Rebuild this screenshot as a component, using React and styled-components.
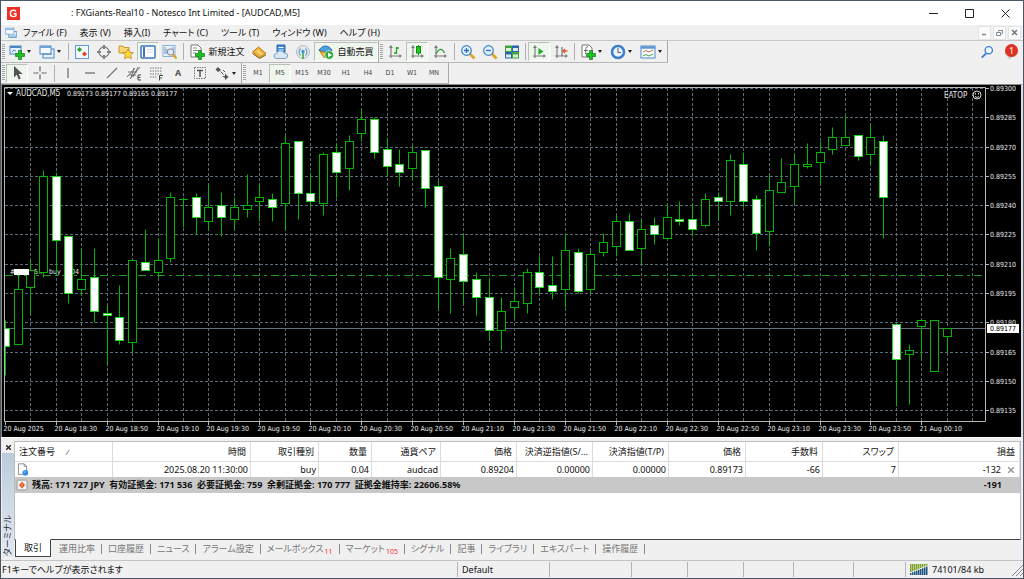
import React from 'react'
import styled, { createGlobalStyle, css } from 'styled-components';

const GlobalStyle = createGlobalStyle`
  * {
    box-sizing: border-box;
  }

  body {
    margin: 0;
    background: #f0f0f0;
    color: #111;
    font-family: "Noto Sans", "Noto Sans CJK JP", sans-serif;
    font-size: 9px;
    line-height: 12px;
    font-feature-settings: "palt";
  }

  button {
    margin: 0;
    padding: 0;
    border: 0;
    background: none;
    color: inherit;
    font: inherit;
    font-feature-settings: inherit;
  }
`;

const Window = styled.div`
  display: flex;
  flex-direction: column;
  min-height: 100vh;
  border: 1px solid #4b5768;
`;

/* ---------- title and menu ---------- */

const TitleBar = styled.header`
  display: flex;
  align-items: center;
  height: 24px;
  padding-left: 6px;
  background: #fff;

  h1 {
    flex: 1;
    margin: 0 0 0 51px;
    font-size: 9px;
    font-weight: 400;
    white-space: nowrap;
  }
`;

const CaptionButton = styled.button`
  display: flex;
  align-items: center;
  justify-content: center;
  width: 36px;
  height: 24px;
`;

const MenuBar = styled.nav`
  display: flex;
  align-items: center;
  height: 16px;
  padding-left: 4px;
  border-bottom: 1px solid #c6c6c6;
`;

const MenuList = styled.div`
  display: flex;
  flex: 1;
  gap: 13px;
  padding-left: 6px;
  white-space: nowrap;
`;

const MdiButton = styled.button`
  display: flex;
  align-items: center;
  justify-content: center;
  width: 13px;
  height: 14px;
  margin-right: 2px;
  background: #fbfbfb;
  border: 1px solid #e4e4e4;
`;

/* ---------- toolbars ---------- */

const ToolRow = styled.div`
  display: flex;
  height: ${p => p.$height}px;
`;

const Toolbar = styled.div`
  display: flex;
  align-items: center;
  border-right: 1px solid #a8a8a8;
  border-bottom: 1px solid #b8b8b8;
  padding-right: ${p => p.$end || 0}px;
`;

const Grip = styled.span`
  width: 3px;
  height: 16px;
  margin: 0 1px 0 1px;
  background: repeating-linear-gradient(#a5a5a5 0 1px, #f0f0f0 1px 2px);
`;

const Separator = styled.span`
  width: 1px;
  height: 17px;
  margin: 0 2px;
  background: #b0b0b0;
`;

const ToolButton = styled.button`
  display: flex;
  align-items: center;
  justify-content: center;
  gap: 3px;
  flex: none;
  width: ${p => p.$width || 22}px;
  height: 19px;
  white-space: nowrap;
  ${p => p.$menu && css`
    width: ${p.$width || 30}px;
    justify-content: flex-start;
    padding-left: 3px;
    gap: 2px;
  `}
  ${p => p.$active && css`
    background: #eef6ee;
    border: 1px solid #b9c2b9;
    border-right-color: #fff;
    border-bottom-color: #fff;
  `}

  b {
    color: #555;
  }
`;

const PeriodButton = styled(ToolButton)`
  color: #444;
  font-family: "DejaVu Sans Condensed", sans-serif;
  font-size: 7px;
`;

const Caret = styled.i`
  border: 2px solid transparent;
  border-top: 3px solid #222;
  border-bottom: 0;
`;

const ToolRowEnd = styled.div`
  display: flex;
  flex: 1;
  justify-content: flex-end;
  align-items: center;
  gap: 5px;
`;

const Alerts = styled.button`
  position: relative;
  width: 24px;
  height: 20px;
  padding-top: 4px;

  span {
    position: absolute;
    top: 2px;
    right: 5px;
    width: 13px;
    height: 13px;
    border-radius: 50%;
    background: #dc3220;
    color: #fff;
    font-size: 9px;
    line-height: 13px;
    text-align: center;
  }
`;

/* ---------- chart ---------- */

const ChartPanel = styled.main`
  background: #000;
  border: solid #8a8d88;
  border-width: 1px 2px 0 1px;
  border-right-color: #dcdcdc;

  svg {
    display: block;
    width: 100%;
    height: auto;
  }

  text {
    fill: #e8e8e8;
    font-family: "DejaVu Sans Condensed", sans-serif;
    font-size: 7px;
  }

  text.name {
    font-size: 8px;
  }

  text.bid {
    fill: #000;
  }
`;

/* ---------- terminal ---------- */

const Terminal = styled.section`
  display: flex;
  flex: 1;
  min-height: 123px;
  padding: 3px 2px 3px 1px;
  border-top: 1px solid #fff;
`;

const TerminalSide = styled.div`
  display: flex;
  flex-direction: column;
  width: 12px;
  flex: none;

  button {
    height: 12px;
    line-height: 0;
  }

  span {
    flex: 1;
    padding-top: 1px;
    background: linear-gradient(to top, #bccbdb, #e2eaf3);
    color: #333;
    line-height: 12px;
    writing-mode: vertical-rl;
    text-orientation: sideways;
    transform: rotate(180deg);
  }
`;

const TerminalBody = styled.div`
  display: flex;
  flex-direction: column;
  flex: 1;
`;

const TableArea = styled.div`
  flex: 1;
  background: #fff;
  border: 1px solid #bdbdbd;
  border-bottom: 1px solid #444;
`;

const OrderTable = styled.table`
  width: 100%;
  border-collapse: separate;
  border-spacing: 0;
  table-layout: fixed;
  white-space: nowrap;

  th, td {
    padding: 0 2px 0 0;
    border-right: 1px solid #dcdcdc;
    text-align: right;
    font-weight: 400;
  }

  th {
    height: 20px;
    padding-right: 4px;
    border-bottom: 1px solid #dcdcdc;
    overflow: hidden;
  }

  td {
    height: 15px;
  }

  th:first-child, td:first-child {
    padding-left: 4px;
    text-align: left;
  }

  td:first-child {
    padding-left: 1px;
  }

  tfoot td {
    height: 16px;
    background: #c8c8c8;
    border: 0;
    font-weight: 700;
  }

  svg {
    display: block;
  }
`;

const CellRow = styled.div`
  display: flex;
  align-items: center;
  justify-content: ${p => (p.$end ? 'flex-end' : 'flex-start')};
  gap: ${p => p.$gap || 6}px;
  padding-right: ${p => p.$pad || 0}px;
`;

const Tabs = styled.div`
  display: flex;
  height: 17px;
  padding-left: 1px;
`;

const Tab = styled.button`
  display: flex;
  align-items: center;
  color: #777;
  white-space: nowrap;

  &::after {
    content: "";
    width: 1px;
    height: 10px;
    margin: 0 6px;
    background: #8a8a8a;
  }

  sub {
    margin-left: 1px;
    padding-top: 7px;
    color: #f03030;
    font-size: 7px;
    line-height: 8px;
    vertical-align: baseline;
  }

  ${p => p.$active && css`
    margin: -1px 8px 0 0;
    padding: 0 8px;
    background: #fff;
    border: 1px solid #444;
    border-top-color: #fff;
    color: #111;

    &::after {
      display: none;
    }
  `}
`;

const StatusBar = styled.footer`
  display: flex;
  align-items: center;
  height: 18px;
  border-top: 1px solid #c4c4c4;
  white-space: nowrap;
`;

const StatusCell = styled.div`
  display: flex;
  align-items: center;
  gap: 4px;
  flex: ${p => (p.$width ? 'none' : 1)};
  width: ${p => (p.$width ? p.$width + 'px' : 'auto')};
  height: 15px;
  padding-left: ${p => (p.$width ? 4 : 1)}px;
  border-left: ${p => (p.$width ? '1px solid #b4b4b4' : 0)};
`;

/* ---------- icons ---------- */

function Icon({ children, size = 16 }) {
    return (
        <svg width={size} height={size} viewBox="0 0 16 16" fill="none" aria-hidden="true">
            {children}
        </svg>
    )
}

const plus = <path d="M9.500 6.500h3v3h3v3h-3v3h-3v-3h-3v-3h3z" fill="#1fbf1f" stroke="#0a7d14" strokeWidth=".7" />
const axes = <path d="M4 2v12M2 12h12M2.600 4L4 2l1.400 2M12.400 10.600L14 12l-1.600 1.400" stroke="#777" strokeWidth="1.100" />

const icons = {
    newChart: <><rect x="1" y="2" width="11" height="8" fill="#e9f2fc" stroke="#4d86c5" /><path d="M1 3h11" stroke="#4d86c5" strokeWidth="2" /><path d="M3 8l2-2 2 1" stroke="#4d86c5" />{plus}</>,
    profiles: <><rect x="4" y="5" width="11" height="9" fill="#e9f2fc" stroke="#4d86c5" /><rect x="1" y="2" width="11" height="8" fill="#f4f9ff" stroke="#4d86c5" /><path d="M1 3h11" stroke="#6fa3da" strokeWidth="2" /><path d="M3 10h10" stroke="#4d86c5" /></>,
    market: <><rect x="1.500" y="1.500" width="13" height="13" fill="#f4f9ff" stroke="#5e9ad8" /><path d="M5.500 3l2.500 2.500L5.500 8 3 5.500z" fill="#28a428" /><path d="M10.500 7.500L13 10l-2.500 2.500L8 10z" fill="#e0402c" /></>,
    target: <><circle cx="8" cy="8" r="5" stroke="#888" strokeWidth="1.300" /><path d="M8 1v4M8 11v4M1 8h4M11 8h4" stroke="#808080" strokeWidth="2.200" /></>,
    navigator: <><path d="M1 2h4l1 1.500h5V9H1z" fill="#f7d878" stroke="#c99a2e" /><path d="M10 5l1.700 3.300 3.600.4-2.700 2.500.8 3.600L10 13l-3.400 1.800.8-3.600-2.700-2.500 3.600-.4z" fill="#ffd83d" stroke="#bd8a10" strokeWidth=".8" /></>,
    terminal: <><rect x="1" y="2" width="14" height="12" rx="1" fill="#fff" stroke="#3d77bd" strokeWidth="1.500" /><path d="M4 3v10" stroke="#3d77bd" strokeWidth="2" /><path d="M7 5.500h6M7 8h6" stroke="#ccd8e4" /></>,
    tester: <><rect x="1" y="1.500" width="12" height="11" fill="#eaf2fb" stroke="#8ab0d8" /><path d="M3 3v7M5 5v5M11 3v3" stroke="#6894c0" /><circle cx="8.500" cy="8" r="3.200" fill="#dceaf8" stroke="#888" /><path d="M11 10.500l3.500 4" stroke="#d9a029" strokeWidth="2" /></>,
    order: <><path d="M2 1h7l3 3v9H2z" fill="#fff" stroke="#777" /><path d="M4 4h4M4 6.500h5M4 9h3" stroke="#888" />{plus}</>,
    editor: <><path d="M1.500 8l7 5.500L15 9.500 7.500 3z" fill="#f2b63a" stroke="#b27a12" /><path d="M1.500 9.500l7 5L15 11" stroke="#8f6414" /><path d="M6 6.500l5 4" stroke="#ffe39a" strokeWidth="1.500" /></>,
    vps: <><path d="M4 1h8v7H4z" fill="#3d8ad6" stroke="#2a68aa" /><path d="M5.500 3.500h5M5.500 6h5" stroke="#fff" /><path d="M3.500 14.500a2.500 2.500 0 010-5 4 4 0 017.500-.5 2.800 2.800 0 011.500 5.500z" fill="#d9e8f6" stroke="#7d9fc2" /></>,
    signals: <><circle cx="8" cy="8" r="6.500" fill="#e2e8ec" stroke="#b4c0c8" /><path d="M5.500 4.500a5 5 0 000 7M10.500 4.500a5 5 0 010 7" stroke="#7aa3c0" strokeWidth="1.200" /><path d="M8 8v7" stroke="#3aa63a" strokeWidth="1.500" /><circle cx="8" cy="7.500" r="1.700" fill="#3d9bd8" /></>,
    auto: <><path d="M1 6.500c3-6 10-6 13 0l-6.500 2z" fill="#4e9fdf" stroke="#2b6faa" /><path d="M2 7.500l4 6 7-2V7.500l-5 1z" fill="#f2bd45" stroke="#b88419" /><circle cx="11.200" cy="11" r="4.300" fill="#27ac36" stroke="#fff" strokeWidth=".6" /><path d="M10 8.500l4 2.500-4 2.500z" fill="#fff" /></>,
    bars: <>{axes}<path d="M9.500 3v7M9.500 4H12M7 9h2.500" stroke="#2ca22c" strokeWidth="1.400" /></>,
    candles: <>{axes}<path d="M9.500 1v10" stroke="#128a12" /><rect x="7.500" y="2.500" width="4" height="6.500" fill="#21c821" stroke="#128a12" /></>,
    line: <>{axes}<path d="M4 10c3-6 6-6 8.500-1" stroke="#2ca22c" strokeWidth="1.300" /></>,
    zoomIn: <><path d="M10 10l4.500 4.500" stroke="#dca62c" strokeWidth="2.800" /><circle cx="6.500" cy="6.500" r="4.800" fill="#e1f0fc" stroke="#3d83c5" strokeWidth="1.200" /><path d="M4 6.500h5M6.500 4v5" stroke="#2a6db0" strokeWidth="1.300" /></>,
    zoomOut: <><path d="M10 10l4.500 4.500" stroke="#dca62c" strokeWidth="2.800" /><circle cx="6.500" cy="6.500" r="4.800" fill="#e1f0fc" stroke="#3d83c5" strokeWidth="1.200" /><path d="M4 6.500h5" stroke="#2a6db0" strokeWidth="1.300" /></>,
    tile: <><path d="M1 1.500h7v6.500H1zM8 8h7v6.500H8z" fill="#3fa63c" /><path d="M8 1.500h7V8H8zM1 8h7v6.500H1z" fill="#2c64b4" /><path d="M2 4h5v3H2zM9 4h5v3H9zM2 10.500h5v3H2zM9 10.500h5v3H9z" fill="#dcecd8" /></>,
    shift: <>{axes}<path d="M7.500 4l5 3.500-5 3.500z" fill="#1faa2b" /></>,
    scroll: <>{axes}<path d="M9 3v9" stroke="#555" /><path d="M14.500 7H10M12 5l-2 2 2 2" stroke="#d85a2a" strokeWidth="1.300" /></>,
    indicators: <><path d="M2 1h7l3 3v9H2z" fill="#fff" stroke="#777" /><path d="M8 3c-3-1-2 3-2.500 7M4 6.500h4" stroke="#666" />{plus}</>,
    clock: <><circle cx="8" cy="8" r="6" fill="#eaf4fd" stroke="#3a7fca" strokeWidth="2.500" /><path d="M8 4v4.500h3" stroke="#666" strokeWidth="1.100" /></>,
    templates: <><rect x="1" y="2" width="14" height="12" fill="#f7fbff" stroke="#4d86c5" /><path d="M1 3.500h14" stroke="#5d97d4" strokeWidth="2.500" /><path d="M3 8l3-1.500L9 8l4-2" stroke="#c8723c" /><path d="M3 12l3-1.500L9 12l4-2" stroke="#45a045" /></>,
    cursor: <path d="M5 1v11.500l2.800-2.700 1.900 4.700 2-.9-1.900-4.500h3.800z" fill="#555" />,
    cross: <path d="M8 1.500v5M8 9.500v5M1.500 8h5M9.500 8h5" stroke="#666" strokeWidth="1.200" />,
    vline: <path d="M8 3v10" stroke="#666" strokeWidth="1.200" />,
    hline: <path d="M3 8h10" stroke="#666" strokeWidth="1.200" />,
    trend: <path d="M3 13L13 3" stroke="#777" strokeWidth="1.200" />,
    channel: <><path d="M1 12L9 3M4 14l10-12M2 7h9M3 10h7M8 3l-3 10M12 2L7 12" stroke="#666" strokeWidth=".9" /><path d="M15 10h-3v5h3M12 12.500h2.500" stroke="#444" /></>,
    fibo: <><path d="M2 3h12M2 6h12M2 9h12M2 12h7" stroke="#777" strokeDasharray="1.500 1" /><path d="M11.500 15.500v-5H15M11.500 13H14" stroke="#444" /></>,
    label: <><rect x="2.500" y="2.500" width="11" height="11" stroke="#777" strokeDasharray="1.500 1" /><path d="M5 5.500h6M8 5.500V12" stroke="#555" strokeWidth="1.500" /></>,
    objects: <><path d="M4 2l3 3-3 2-2.500-2.500z" fill="#555" /><path d="M6.500 6.500l3 3M9 5l2 2" stroke="#555" /><path d="M8 11h3V8.500L14.500 12 11 15v-2z" fill="#555" /></>,
    search: <><path d="M7 9.500L2 14.500" stroke="#3d7fd0" strokeWidth="2.200" /><circle cx="10" cy="6" r="4.200" fill="#f2f8ff" stroke="#3d7fd0" strokeWidth="1.500" /></>,
    bubble: <path d="M8 4c9 0 9 8 1 8l-3 3v-3c-6-1-6-8 2-8z" fill="#e6e6e6" stroke="#aaa" />,
    windows: <><rect x="5" y="6" width="10" height="8" fill="#e9f2fc" stroke="#4d86c5" /><rect x="1" y="1.500" width="11" height="8" fill="#f4f9ff" stroke="#6fa3da" /><path d="M1 3h11M5 12h10" stroke="#6fa3da" strokeWidth="1.500" /></>,
    doc: <><path d="M3 1h7l3 3v10H3z" fill="#fff" stroke="#778" /><path d="M10 1v3h3" stroke="#778" /><circle cx="11.500" cy="12" r="3.500" fill="#2f8be0" /><path d="M10 11h2" stroke="#bfe0ff" /></>,
    balance: <><rect x="1.500" y="1.500" width="13" height="13" rx="1" fill="#f2f2f2" stroke="#888" /><path d="M8 3.500L12 8 8 12.500 4 8z" fill="#e0402c" /><path d="M8 4v8M6 8h4" stroke="#f7b23c" /></>,
}

/* ---------- data ---------- */

// [open, high, low, close] in points over 0.89000
const candles = [
    [177, 181, 153, 168], [169, 204, 169, 197], [198, 212, 185, 207], [206, 258, 203, 255], [255, 257, 205, 222],
    [224, 224, 190, 195], [197, 218, 194, 202], [203, 218, 180, 186], [185, 189, 158, 184], [183, 199, 169, 171],
    [170, 212, 165, 212], [211, 228, 207, 207], [206, 223, 203, 212], [213, 247, 211, 244], [243, 244, 229, 243],
    [244, 246, 225, 234], [232, 251, 228, 239], [240, 247, 224, 234], [233, 244, 228, 239], [238, 256, 234, 240],
    [242, 251, 232, 244], [243, 246, 232, 239], [241, 276, 228, 272], [273, 273, 233, 246], [246, 257, 239, 242],
    [241, 267, 235, 266], [267, 272, 244, 257], [259, 276, 248, 273], [277, 289, 273, 284], [284, 285, 264, 267],
    [269, 275, 255, 260], [261, 269, 250, 257], [259, 271, 253, 267], [268, 268, 239, 249], [250, 253, 187, 203],
    [202, 218, 185, 213], [215, 225, 190, 201], [202, 206, 184, 193], [193, 203, 171, 176], [176, 193, 166, 186],
    [188, 198, 182, 191], [190, 208, 185, 206], [206, 214, 195, 198], [199, 214, 192, 196], [197, 225, 188, 217],
    [216, 218, 195, 196], [197, 217, 195, 215], [216, 226, 214, 221], [219, 235, 214, 232], [232, 236, 217, 217],
    [218, 233, 210, 228], [230, 234, 220, 225], [223, 241, 222, 234], [233, 242, 230, 232], [233, 241, 224, 228],
    [230, 246, 229, 243], [244, 247, 233, 242], [242, 266, 235, 263], [261, 267, 239, 242], [243, 245, 217, 226],
    [227, 256, 219, 248], [247, 264, 247, 252], [250, 266, 241, 261], [260, 272, 259, 261], [262, 273, 251, 267],
    [269, 280, 266, 275], [271, 286, 271, 275], [276, 276, 263, 265], [266, 281, 261, 275], [273, 276, 223, 244],
    [179, 179, 137, 161], [164, 169, 138, 166], [178, 181, 162, 181], [155, 181, 155, 181], [173, 177, 165, 177],
]

const times = ['20 Aug 2025', '20 Aug 18:30', '20 Aug 18:50', '20 Aug 19:10', '20 Aug 19:30', '20 Aug 19:50',
    '20 Aug 20:10', '20 Aug 20:30', '20 Aug 20:50', '20 Aug 21:10', '20 Aug 21:30', '20 Aug 21:50', '20 Aug 22:10',
    '20 Aug 22:30', '20 Aug 22:50', '20 Aug 23:10', '20 Aug 23:30', '20 Aug 23:50', '21 Aug 00:10']

const prices = [300, 285, 270, 255, 240, 225, 210, 195, 180, 165, 150, 135]

const menus = ['ファイル (F)', '表示 (V)', '挿入(I)', 'チャート (C)', 'ツール (T)', 'ウィンドウ (W)', 'ヘルプ (H)']

const periods = ['M1', 'M5', 'M15', 'M30', 'H1', 'H4', 'D1', 'W1', 'MN']

const columns = [
    ['注文番号', 98], ['時間', 138], ['取引種別', 68], ['数量', 53], ['通貨ペア', 69], ['価格', 76],
    ['決済逆指値(S/...', 76], ['決済指値(T/P)', 76], ['価格', 77], ['手数料', 77], ['スワップ', 76], ['損益'],
]

const order = ['2025.08.20 11:30:00', 'buy', '0.04', 'audcad', '0.89204', '0.00000', '0.00000', '0.89173', '-66', '7']

const tabs = [['取引'], ['運用比率'], ['口座履歴'], ['ニュース'], ['アラーム設定'], ['メールボックス', 11], ['マーケット', 105],
    ['シグナル'], ['記事'], ['ライブラリ'], ['エキスパート'], ['操作履歴']]

/* ---------- parts ---------- */

const PLOT = { left: 3, right: 984, top: 3, bottom: 336 }
const xOf = i => Math.round(2.8 + i * 12.73) + 0.5
const yOf = p => Math.round(3 + (300 - p) * 1.953) + 0.5

function Candle({ index, data }) {
    const [open, high, low, close] = data
    const x = xOf(index)
    const top = yOf(Math.max(open, close))
    const bottom = yOf(Math.min(open, close))
    return (
        <g stroke="#00b400">
            <path d={`M${x} ${yOf(high)}V${yOf(low)}`} />
            {open === close
                ? <path d={`M${x - 4.5} ${top}h9`} />
                : <rect x={x - 4} y={top} width="8" height={bottom - top} fill={close < open ? '#fff' : '#000'} stroke={close < open ? '#20d820' : '#00b400'} />}
        </g>
    )
}

function Chart() {
    const { left, right, top, bottom } = PLOT
    const verticals = Array.from({ length: 38 }, (_, k) => xOf((k + 1) * 2))
    return (
        <ChartPanel>
            <svg viewBox="0 0 1019 352" role="img" aria-label="AUDCAD,M5">
                <clipPath id="plot">
                    <rect x={left} y={top} width={right - left} height={bottom - top} />
                </clipPath>
                <g stroke="#5c6b7a" strokeDasharray="3 2">
                    {verticals.map(x => <path key={x} d={`M${x} ${top}V${bottom}`} />)}
                    {prices.map(p => <path key={p} d={`M${left} ${yOf(p)}H${right}`} />)}
                </g>
                <path d={`M${left} ${yOf(177)}H${right}`} stroke="#5f6f80" />
                <path d={`M${left} ${yOf(204)}H${right}`} stroke="#1f9a1f" strokeDasharray="8 4 3 4" />
                <text x="8" y="189">#</text>
                <text x="32" y="189">5..</text>
                <text x="47" y="189">buy</text>
                <text x="63" y="189">0.04</text>
                <g clipPath="url(#plot)">
                    {candles.map((c, i) => <Candle key={i} index={i} data={c} />)}
                </g>
                <rect x="12" y="184" width="15" height="6" fill="#fff" />
                <path d={`M${left - 0.5} ${bottom + 0.5}V2.500H${right - 0.5}V${bottom + 0.5}z`} fill="none" stroke="#b8b8b8" />
                <path d="M5 7h6l-3 3z" fill="#fff" />
                <text className="name" x="14" y="11">AUDCAD,M5</text>
                <text x="65" y="11">0.89173 0.89177 0.89165 0.89177</text>
                <text className="name" x="942" y="13">EATOP</text>
                <g stroke="#ddd" fill="none">
                    <circle cx="975" cy="10" r="4" />
                    <path d="M973 11.500q2 2 4 0M973.500 8v1.500M976.500 8v1.500" />
                </g>
                {prices.map(p => (
                    <g key={p}>
                        <path d={`M${right} ${yOf(p)}h3`} stroke="#b8b8b8" />
                        <text x={right + 4} y={yOf(p) + 2.5}>{`0.89${p}`}</text>
                    </g>
                ))}
                <rect x={right + 1} y={yOf(177) - 4.5} width="32" height="9" fill="#fff" />
                <text className="bid" x={right + 4} y={yOf(177) + 2.5}>0.89177</text>
                {times.map((t, k) => (
                    <g key={t}>
                        <path d={`M${xOf(k * 4)} ${bottom}v4`} stroke="#b8b8b8" />
                        <text x={xOf(k * 4) - 2} y="346">{t}</text>
                    </g>
                ))}
            </svg>
        </ChartPanel>
    )
}

function Tool({ icon, label, text, menu, active, width }) {
    return (
        <ToolButton aria-label={label || text} $menu={menu} $active={active} $width={width}>
            <Icon>{icons[icon]}</Icon>
            {text}
            {menu && <Caret />}
        </ToolButton>
    )
}

function Toolbars() {
    return (
        <>
            <ToolRow $height={22}>
                <Toolbar>
                    <Grip />
                    <Tool icon="newChart" label="New chart" menu />
                    <Tool icon="profiles" label="Profiles" menu />
                    <Separator />
                    <Tool icon="market" label="Market watch" />
                    <Tool icon="target" label="Data window" />
                    <Tool icon="navigator" label="Navigator" />
                    <Tool icon="terminal" label="Terminal" active />
                    <Tool icon="tester" label="Strategy tester" />
                    <Separator />
                    <Tool icon="order" text="新規注文" width={62} />
                    <Tool icon="editor" label="MetaEditor" />
                    <Tool icon="vps" label="VPS" />
                    <Tool icon="signals" label="Signals" />
                    <Tool icon="auto" text="自動売買" width={64} active />
                </Toolbar>
                <Toolbar>
                    <Grip />
                    <Tool icon="bars" label="Bar chart" />
                    <Tool icon="candles" label="Candlesticks" active />
                    <Tool icon="line" label="Line chart" width={24} />
                    <Separator />
                    <Tool icon="zoomIn" label="Zoom in" />
                    <Tool icon="zoomOut" label="Zoom out" />
                    <Tool icon="tile" label="Tile windows" />
                    <Separator />
                    <Tool icon="shift" label="Auto scroll" active />
                    <Tool icon="scroll" label="Chart shift" />
                    <Separator />
                    <Tool icon="indicators" label="Indicators" menu />
                    <Tool icon="clock" label="Periods" menu />
                    <Tool icon="templates" label="Templates" menu />
                </Toolbar>
                <ToolRowEnd>
                    <Icon size={14}>{icons.search}</Icon>
                    <Alerts aria-label="Alerts">
                        <Icon size={14}>{icons.bubble}</Icon>
                        <span>1</span>
                    </Alerts>
                </ToolRowEnd>
            </ToolRow>
            <ToolRow $height={21}>
                <Toolbar>
                    <Grip />
                    <Tool icon="cursor" label="Cursor" active />
                    <Tool icon="cross" label="Crosshair" width={24} />
                    <Separator />
                    <Tool icon="vline" label="Vertical line" />
                    <Tool icon="hline" label="Horizontal line" />
                    <Tool icon="trend" label="Trendline" />
                    <Tool icon="channel" label="Channel" />
                    <Tool icon="fibo" label="Fibonacci" />
                    <ToolButton aria-label="Text"><b>A</b></ToolButton>
                    <Tool icon="label" label="Text label" />
                    <Tool icon="objects" label="Arrows" menu />
                </Toolbar>
                <Toolbar $end={3}>
                    <Grip />
                    {periods.map(p => <PeriodButton key={p} $active={p === 'M5'}>{p}</PeriodButton>)}
                </Toolbar>
            </ToolRow>
        </>
    )
}

function Orders() {
    return (
        <OrderTable>
            <colgroup>
                {columns.map(([, width], i) => <col key={i} width={width} />)}
            </colgroup>
            <thead>
                <tr>
                    {columns.map(([name], i) => (
                        <th key={i}>{i === 0 ? <CellRow $gap={12}>{name}<small>⁄</small></CellRow> : name}</th>
                    ))}
                </tr>
            </thead>
            <tbody>
                <tr>
                    <td><Icon size={13}>{icons.doc}</Icon></td>
                    {order.map((v, i) => <td key={i}>{v}</td>)}
                    <td>
                        <CellRow $end $gap={7} $pad={3}>
                            -132
                            <button aria-label="Close order">
                                <svg width="6" height="6" viewBox="0 0 6 6"><path d="M0 0l6 6M6 0L0 6" stroke="#999" strokeWidth="1.500" /></svg>
                            </button>
                        </CellRow>
                    </td>
                </tr>
            </tbody>
            <tfoot>
                <tr>
                    <td colSpan={11}>
                        <CellRow $gap={4}>
                            <Icon size={12}>{icons.balance}</Icon>
                            <span>残高: 171 727 JPY&nbsp; 有効証拠金: 171 536&nbsp; 必要証拠金: 759&nbsp; 余剰証拠金: 170 777&nbsp; 証拠金維持率: 22606.58%</span>
                        </CellRow>
                    </td>
                    <td><CellRow $end $pad={16}>-191</CellRow></td>
                </tr>
            </tfoot>
        </OrderTable>
    )
}

export default function App() {
    return (
        <Window>
            <GlobalStyle />
            <TitleBar>
                <svg width="13" height="13" viewBox="0 0 13 13" fill="none" aria-hidden="true">
                    <rect width="13" height="13" fill="#ee2f24" />
                    <path d="M9 4.500Q8 3.300 6.500 3.300A3.100 3.100 0 006.500 9.600Q8 9.600 9 8.700V6.700H6.600" stroke="#fff" strokeWidth="1.400" />
                </svg>
                <h1>: FXGiants-Real10 - Notesco Int Limited - [AUDCAD,M5]</h1>
                <CaptionButton aria-label="Minimize"><svg width="9" height="9"><path d="M0 4.500h9" stroke="#222" /></svg></CaptionButton>
                <CaptionButton aria-label="Maximize"><svg width="9" height="9"><path d="M.5.5h8v8h-8z" stroke="#222" fill="none" /></svg></CaptionButton>
                <CaptionButton aria-label="Close"><svg width="9" height="9"><path d="M.5.5l8 8M8.500.5l-8 8" stroke="#222" /></svg></CaptionButton>
            </TitleBar>
            <MenuBar>
                <Icon size={12}>{icons.windows}</Icon>
                <MenuList>
                    {menus.map(m => <button key={m}>{m}</button>)}
                </MenuList>
                <MdiButton aria-label="Minimize chart"><svg width="7" height="7"><path d="M1 5.500h4" stroke="#7b8894" strokeWidth="1.500" /></svg></MdiButton>
                <MdiButton aria-label="Restore chart"><svg width="7" height="7" fill="none" stroke="#7b8894"><path d="M2.500 2.500v-1h4v3h-1M.5 3.500h4v3h-4z" /></svg></MdiButton>
                <MdiButton aria-label="Close chart"><svg width="7" height="7"><path d="M1 1l5 5M6 1L1 6" stroke="#6b7884" strokeWidth="1.500" /></svg></MdiButton>
            </MenuBar>
            <Toolbars />
            <Chart />
            <Terminal>
                <TerminalSide>
                    <button aria-label="Close terminal"><svg width="5" height="5"><path d="M0 0l5 5M5 0L0 5" stroke="#222" strokeWidth="1.300" /></svg></button>
                    <span>ターミナル</span>
                </TerminalSide>
                <TerminalBody>
                    <TableArea>
                        <Orders />
                    </TableArea>
                    <Tabs>
                        {tabs.map(([name, count], i) => (
                            <Tab key={name} $active={i === 0}>{name}{count && <sub>{count}</sub>}</Tab>
                        ))}
                    </Tabs>
                </TerminalBody>
            </Terminal>
            <StatusBar>
                <StatusCell>F1キーでヘルプが表示されます</StatusCell>
                <StatusCell $width={92}>Default</StatusCell>
                <StatusCell $width={82} />
                <StatusCell $width={56} />
                <StatusCell $width={56} />
                <StatusCell $width={50} />
                <StatusCell $width={60} />
                <StatusCell $width={52} />
                <StatusCell $width={106}>
                    <svg width="18" height="11" viewBox="0 0 18 11" aria-hidden="true">
                        {[0, 2, 4, 6, 8, 10, 12, 14, 16].map(x => (
                            <g key={x}>
                                <rect x={x} width="1.500" height={8 - x / 2.5} fill="#7ea329" />
                                <rect x={x} y={9 - x / 2.5} width="1.500" height={2 + x / 2.5} fill="#1c5580" />
                            </g>
                        ))}
                    </svg>
                    74101/84 kb
                </StatusCell>
                <svg width="12" height="12" aria-hidden="true"><path d="M1 12L12 1M5 12l7-7M9 12l3-3" stroke="#8a8a8a" /></svg>
            </StatusBar>
        </Window>
    )
}
